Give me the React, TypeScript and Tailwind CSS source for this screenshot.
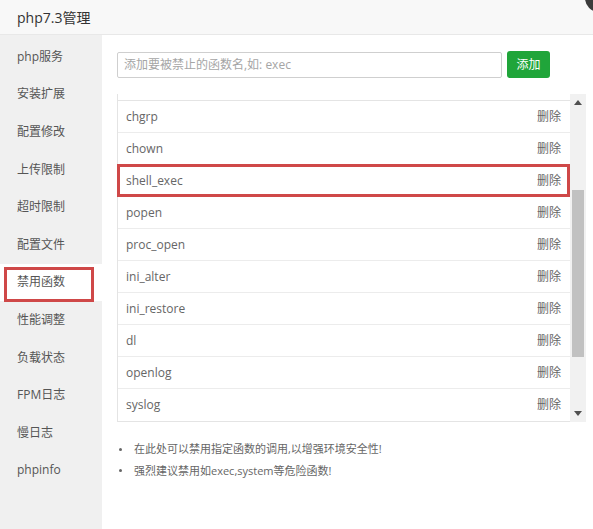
import React from "react";

const menu = [
  "php服务",
  "安装扩展",
  "配置修改",
  "上传限制",
  "超时限制",
  "配置文件",
  "禁用函数",
  "性能调整",
  "负载状态",
  "FPM日志",
  "慢日志",
  "phpinfo",
];

const rows = [
  "chgrp",
  "chown",
  "shell_exec",
  "popen",
  "proc_open",
  "ini_alter",
  "ini_restore",
  "dl",
  "openlog",
  "syslog",
];

export default function App() {
  return (
    <div
      className="relative w-[593px] h-[529px] overflow-hidden bg-white"
      style={{ fontFamily: '"Open Sans", "Noto Sans CJK SC", sans-serif' }}
    >
      {/* close button corner */}
      <div className="absolute left-[585px] top-[-16px] w-[28px] h-[28px] rounded-full bg-[#3c3c3c]" />

      <div className="h-[35px] bg-[#f8f8f8] border-b border-[#e8e8e8] flex items-center pl-[17px] text-[14px] text-[#333]">
        php7.3管理
      </div>

      <div className="flex h-[494px]">
        <div className="w-[102px] bg-[#f0f0f0] pt-[3px] flex flex-col">
          {menu.map((m) => {
            const active = m === "禁用函数";
            return (
              <div
                key={m}
                className={
                  active
                    ? "relative h-[37.6px] flex items-center pl-[17px] text-[12px] text-[#555] bg-white"
                    : "relative h-[37.6px] flex items-center pl-[17px] text-[12px] text-[#555]"
                }
              >
                {m}
                {active && (
                  <div className="absolute left-[4px] top-[3px] w-[90px] h-[35px] border-[3px] border-[#cf4848]" />
                )}
              </div>
            );
          })}
        </div>

        <div className="flex-1 pl-[15px] pt-[16px]">
          <div className="flex items-center gap-[5px]">
            <div className="w-[385px] h-[26px] border border-[#cfcfcf] rounded-[2px] flex items-center pl-[6px] text-[12px] text-[#a5a5a5]">
              添加要被禁止的函数名,如: exec
            </div>
            <div className="w-[43px] h-[27px] bg-[#20a53a] rounded-[3px] flex items-center justify-center text-[12px] text-white">
              添加
            </div>
          </div>

          <div className="mt-[16px] flex w-[469px]">
            <div className="w-[453px] border-l border-b border-[#e4e4e4] flex flex-col">
              <div className="h-[7px] border-b border-[#e4e4e4]" />
              {rows.map((r) => (
                <div
                  key={r}
                  className="relative h-[32px] border-b border-[#ececec] flex items-center justify-between pl-[8px] pr-[9px] text-[12px] text-[#666] last:border-b-0"
                >
                  <span>{r}</span>
                  <span className="text-[#666]">删除</span>
                  {r === "shell_exec" && (
                    <div className="absolute left-[-1px] top-[-1px] right-0 bottom-[-1px] border-[3px] border-[#cf4848]" />
                  )}
                </div>
              ))}
            </div>
            <div className="w-[16px] bg-[#f1f1f1] flex flex-col items-center justify-between py-[6px]">
              <svg width="8" height="5" viewBox="0 0 8 5">
                <polygon points="4,0 8,5 0,5" fill="#505050" />
              </svg>
              <div className="flex-1 w-full flex flex-col items-center pt-[85px] pb-[50px]">
                <div className="w-[12px] h-[167px] bg-[#c1c1c1]" />
                <div className="flex-1" />
              </div>
              <svg width="8" height="5" viewBox="0 0 8 5">
                <polygon points="0,0 8,0 4,5" fill="#505050" />
              </svg>
            </div>
          </div>

          <ul className="mt-[19px] flex flex-col gap-[5px] text-[11px] text-[#666]">
            <li className="flex items-center">
              <span className="w-[3px] h-[3px] rounded-full bg-[#666] ml-[2px] mr-[12px]" />
              在此处可以禁用指定函数的调用,以增强环境安全性!
            </li>
            <li className="flex items-center">
              <span className="w-[3px] h-[3px] rounded-full bg-[#666] ml-[2px] mr-[12px]" />
              强烈建议禁用如exec,system等危险函数!
            </li>
          </ul>
        </div>
      </div>
    </div>
  );
}
